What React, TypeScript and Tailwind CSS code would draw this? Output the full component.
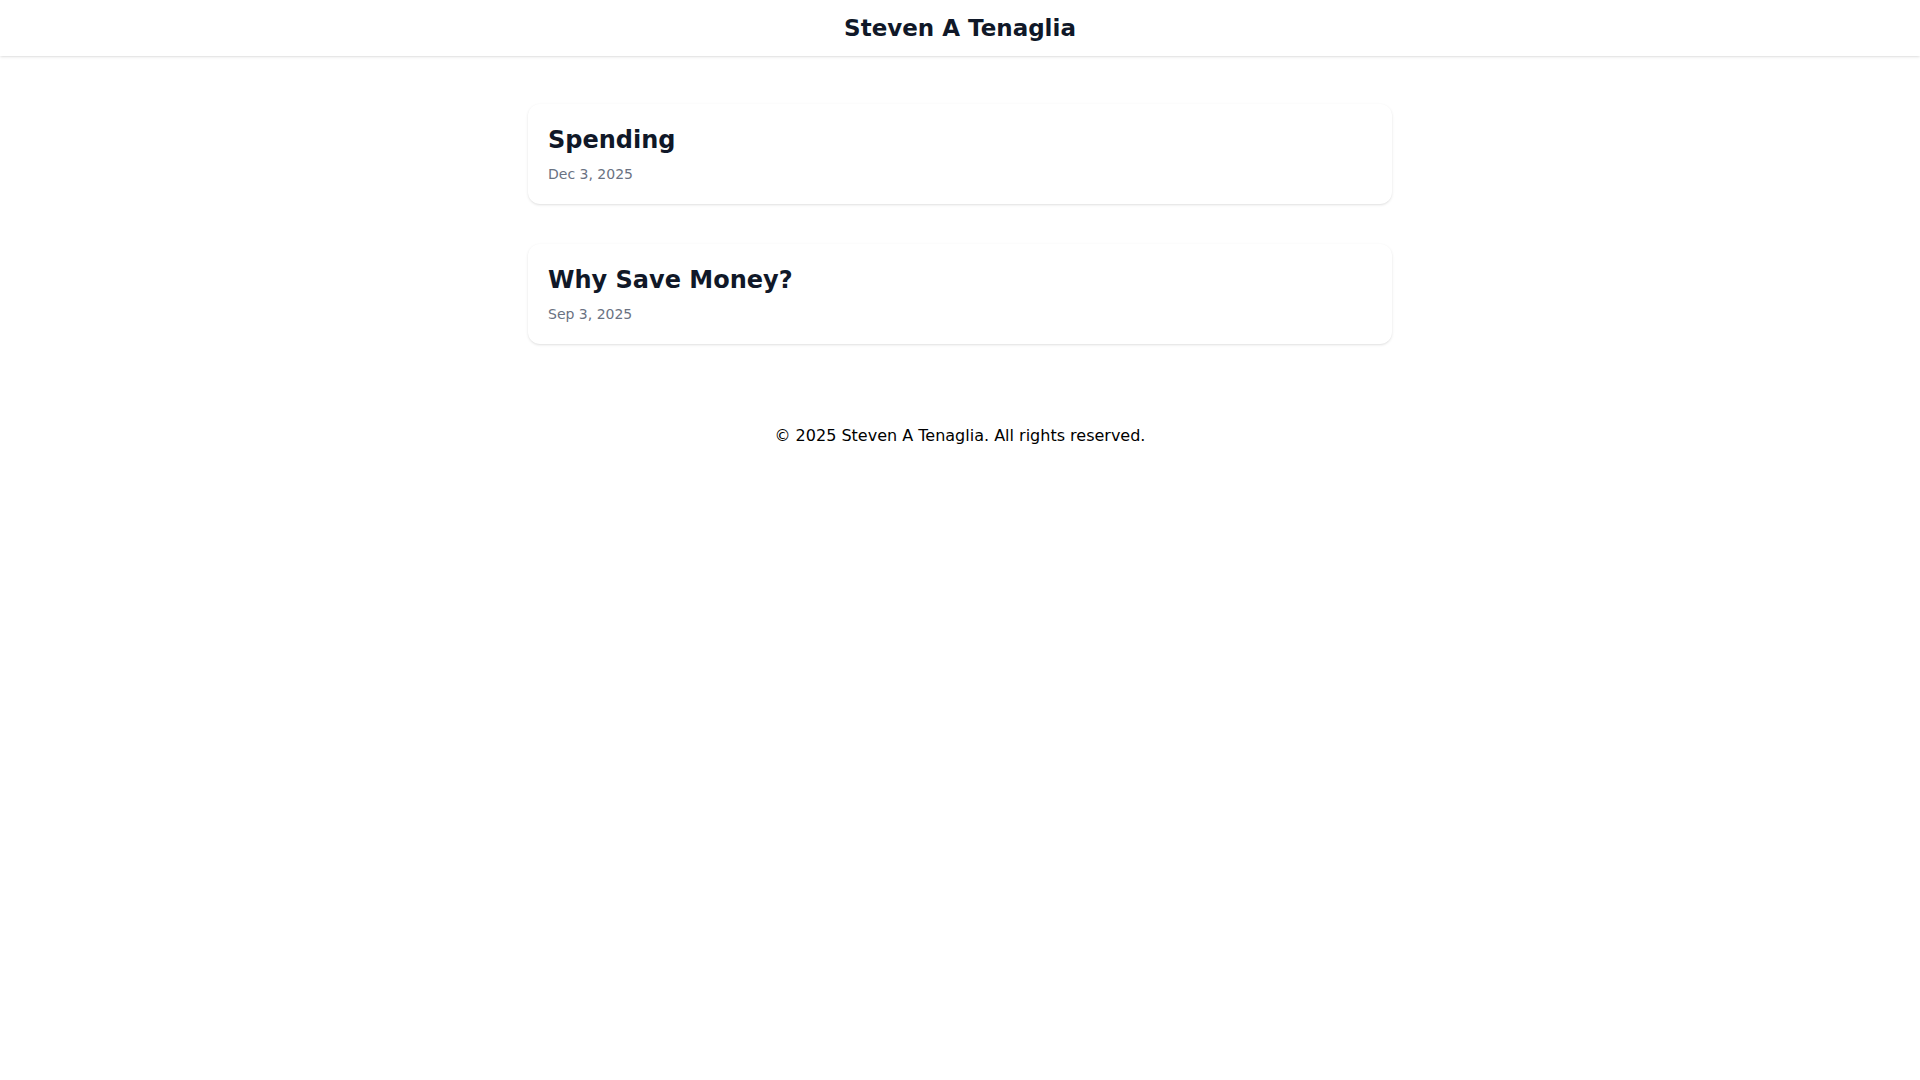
import React from "react";

const posts = [
  { title: "Spending", date: "Dec 3, 2025" },
  { title: "Why Save Money?", date: "Sep 3, 2025" },
];

export default function App() {
  return (
    <div
      className="min-h-screen bg-white text-black"
      style={{ fontFamily: '"DejaVu Sans", sans-serif' }}
    >
      <header className="h-14 flex items-center justify-center bg-white shadow-sm">
        <h1 className="text-[23px] font-bold text-gray-900">Steven A Tenaglia</h1>
      </header>
      <main className="max-w-4xl mx-auto px-4 py-12 flex flex-col gap-10">
        {posts.map((p) => (
          <div
            key={p.title}
            className="bg-white rounded-xl shadow-sm p-5"
          >
            <h2 className="text-2xl font-bold text-gray-900">{p.title}</h2>
            <p className="mt-2 text-sm text-gray-500">{p.date}</p>
          </div>
        ))}
      </main>
      <footer className="py-8 text-center text-base text-black">
        © 2025 Steven A Tenaglia. All rights reserved.
      </footer>
    </div>
  );
}
